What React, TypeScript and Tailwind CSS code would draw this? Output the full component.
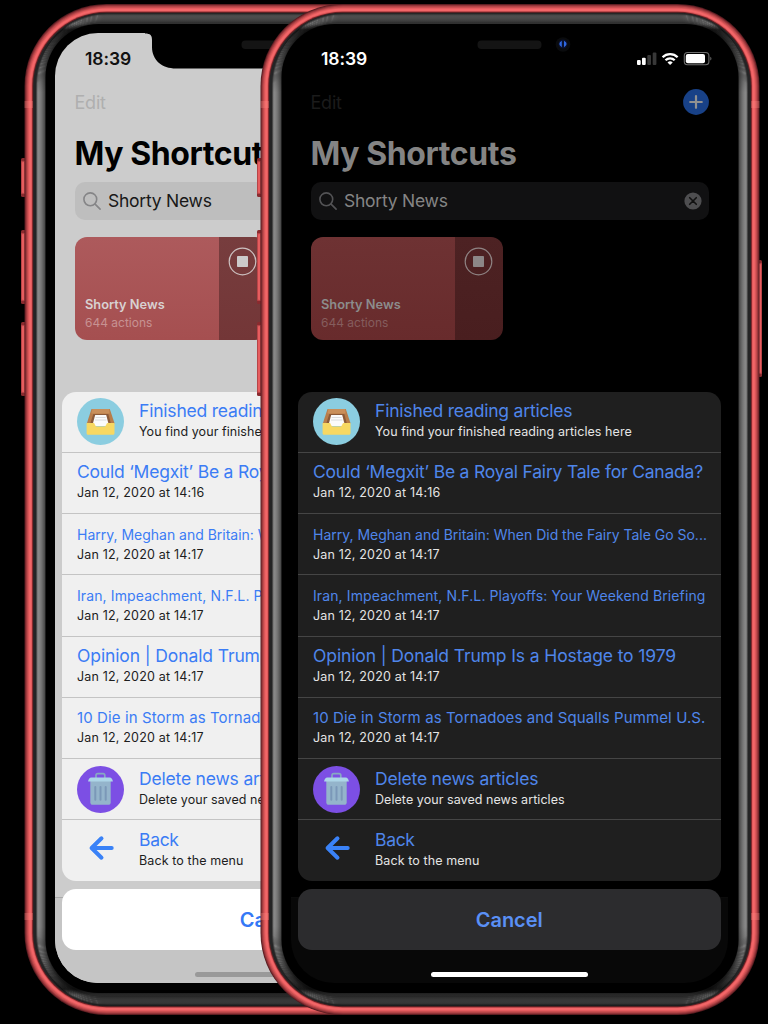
import { useId } from "react";
import clsx from "clsx";

type Row = {
  title: string;
  sub: string;
  icon?: "tray" | "trash" | "back";
  titleClass: string;
  subClass: string;
};

const ROWS: Row[] = [
  { title: "Finished reading articles", sub: "You find your finished reading articles here", icon: "tray", titleClass: "text-[17.5px] tracking-[-0.2px]", subClass: "tracking-[0.07px]" },
  { title: "Could ‘Megxit’ Be a Royal Fairy Tale for Canada?", sub: "Jan 12, 2020 at 14:16", titleClass: "text-[17.5px] tracking-[-0.21px]", subClass: "tracking-[0.18px]" },
  { title: "Harry, Meghan and Britain: When Did the Fairy Tale Go So...", sub: "Jan 12, 2020 at 14:17", titleClass: "text-[14px] tracking-[-0.01px] pt-[1px]", subClass: "tracking-[0.18px]" },
  { title: "Iran, Impeachment, N.F.L. Playoffs: Your Weekend Briefing", sub: "Jan 12, 2020 at 14:17", titleClass: "text-[14px] tracking-[0.11px] pt-[1px]", subClass: "tracking-[0.18px]" },
  { title: "Opinion | Donald Trump Is a Hostage to 1979", sub: "Jan 12, 2020 at 14:17", titleClass: "text-[17.5px] tracking-[-0.11px]", subClass: "tracking-[0.18px]" },
  { title: "10 Die in Storm as Tornadoes and Squalls Pummel U.S.", sub: "Jan 12, 2020 at 14:17", titleClass: "text-[15px] tracking-[0.1px] pt-[1px]", subClass: "tracking-[0.18px]" },
  { title: "Delete news articles", sub: "Delete your saved news articles", icon: "trash", titleClass: "text-[17.5px] tracking-[-0.19px]", subClass: "tracking-[0.06px]" },
  { title: "Back", sub: "Back to the menu", icon: "back", titleClass: "text-[17.5px] tracking-[-0.3px]", subClass: "tracking-[0.1px]" },
];

function TrayIcon() {
  return (
    <svg className="size-[47px]" viewBox="0 0 47 47">
      <circle cx="23.5" cy="23.5" r="23.5" fill="#8bcde0" />
      <path d="M14.5 11h18.3l4.8 14.5H9.8z" fill="#b87c49" />
      <path d="M15.3 11h16.8l.6 4.6H14.4z" fill="#c98f5a" />
      <path d="M16.3 16h15l2.7 10H13.1z" fill="#8b5a38" />
      <path d="M18.2 17h11l2.9 11H15.2z" fill="#fbfbfb" />
      <path d="M18.6 19.5h10M18 22h11.3" stroke="#d3d5d8" strokeWidth=".8" />
      <path d="M9.6 25h7.2c1 0 1.1 3.4 2.7 3.4h8.2c1.6 0 1.7-3.4 2.7-3.4h7.1v10c0 1.2-.5 1.8-1.6 1.8H11.2c-1.1 0-1.6-.6-1.6-1.8z" fill="#f7d862" />
    </svg>
  );
}

function TrashIcon() {
  return (
    <svg className="size-[47px]" viewBox="0 0 47 47">
      <circle cx="23.5" cy="23.5" r="23.5" fill="#7c4fe4" />
      <path d="M19 12V9.6c0-1.2.6-1.9 1.8-1.9h5.2c1.2 0 1.8.7 1.8 1.9V12" fill="none" stroke="#86a9c2" strokeWidth="1.7" />
      <path d="M13.3 15h20.4v21.2c0 1.7-.9 2.6-2.6 2.6H15.9c-1.7 0-2.6-.9-2.6-2.6z" fill="#94b4cb" />
      <path d="M14.4 11.500h18.2c1.9 0 3.1 1.900 3.300 4H11.100c.2-2.100 1.400-4 3.300-4z" fill="#add5e8" />
      <path d="M18.300 21v12.800M23.500 21v12.800M28.700 21v12.800" stroke="#7b98b8" strokeWidth="2" strokeLinecap="round" />
    </svg>
  );
}

function BackIcon() {
  return (
    <svg className="size-[47px]" viewBox="0 0 47 47">
      <path d="M24.500 13.300L14.600 23l9.900 9.700M15 23h19.700" fill="none" stroke="#3a82f7" strokeWidth="4" strokeLinecap="round" strokeLinejoin="round" />
    </svg>
  );
}

function PhoneFrame() {
  const id = useId();
  const side = `side${id}`;
  const bands: [number, string][] = [
    [0, "#541b1f"], [0.7, "#802c31"], [1.6, "#a33c40"], [2.6, "#c44c4e"], [3.7, "#e05a5c"],
    [4.8, "#f36668"], [6.9, "#d95557"], [7.7, "#6e2024"], [8.7, "#242425"],
  ];
  const glass = [0.52, 0.9, 1, 0.95, 0.88, 0.8, 0.7, 0.6, 0.5, 0.38];
  const button = (x: number, y: number, h: number) => (
    <g key={y}>
      <rect x={x} y={y} width="6" height={h} rx="1.5" fill="#8a2b2f" />
      <rect x={x} y={y + 3} width="4.5" height={h - 6} rx="1" fill="#b84447" />
      <rect x={x + 1} y={y + 4} width="2.6" height={h - 8} rx="1" fill="#e65d5f" />
      <rect x={x + 3.6} y={y + 4} width=".8" height={h - 8} fill="#a23a3d" />
    </g>
  );
  return (
    <svg className="absolute top-0 left-0 overflow-visible" width="500" height="1011" viewBox="0 0 500 1011" aria-hidden="true">
      <defs>
        <linearGradient id={side} gradientUnits="userSpaceOnUse" x1="0" y1="9" x2="0" y2="1002">
          <stop offset="0" stopColor="#5c5c5c" />
          <stop offset=".011" stopColor="#808080" />
          <stop offset=".017" stopColor="#222" />
          <stop offset=".034" stopColor="#484848" />
          <stop offset=".08" stopColor="#a2a2a2" />
          <stop offset=".92" stopColor="#a2a2a2" />
          <stop offset=".955" stopColor="#707070" />
          <stop offset=".983" stopColor="#202020" />
          <stop offset=".989" stopColor="#6c6c6c" />
          <stop offset="1" stopColor="#3c3c3c" />
        </linearGradient>
      </defs>
      {button(-3, 154, 39)}
      {button(-3, 226, 74)}
      {button(-3, 318, 74)}
      <g transform="matrix(-1 0 0 1 500 0)">{button(-2, 256, 117)}</g>
      {bands.map(([d, c]) => (
        <rect key={d} x={0.5 + d} y={d} width={499 - 2 * d} height={1011 - 2 * d} rx={82 - d} fill={c} />
      ))}
      {glass.map((o, i) => {
        const box = { x: 12.2 + i, y: 9.4 + i, width: 475.6 - 2 * i, height: 992.2 - 2 * i, rx: 70.5 - i * 1.5 };
        return (
          <g key={i}>
            <rect {...box} fill="#000" />
            <rect {...box} fill={`url(#${side})`} opacity={o} />
          </g>
        );
      })}
      <rect x="21.5" y="20" width="457" height="969" rx="53" fill="#000" />
      <g fill="#ff8a86" opacity=".3">
        <rect x=".5" y="97" width="8.5" height="7" />
        <rect x=".5" y="909" width="8.5" height="7" />
        <rect x="491" y="97" width="8.5" height="7" />
        <rect x="491" y="909" width="8.5" height="7" />
      </g>
    </svg>
  );
}

function StatusIcons() {
  return (
    <svg width="76" height="16" viewBox="0 0 76 16" aria-label="status">
      <g fill="#fff">
        <rect x="1" y="9" width="3.7" height="5" rx="1" />
        <rect x="6" y="6.8" width="3.7" height="7.2" rx="1" />
        <rect x="11.3" y="4" width="3.7" height="10" rx="1" opacity=".22" />
        <rect x="16.7" y="1.5" width="3.7" height="12.5" rx="1" opacity=".22" />
      </g>
      <g fill="none" stroke="#fff" strokeWidth="2.3">
        <path d="M26.6 6.2a10.5 10.5 0 0 1 15 0" />
        <path d="M29.5 9.3a6.5 6.5 0 0 1 9.2 0" />
      </g>
      <path d="M31.5 11.4a3.8 3.8 0 0 1 5.2 0L34.1 14z" fill="#fff" />
      <rect x="48.3" y="1.5" width="24.6" height="12.2" rx="3.3" fill="none" stroke="#6d6d6d" strokeWidth="1.1" />
      <rect x="49.8" y="3" width="19.2" height="9.2" rx="2" fill="#fff" />
      <path d="M74.3 5.7c1.5.6 1.5 3.3 0 3.9z" fill="#6d6d6d" />
    </svg>
  );
}

function NotchAndCamera() {
  return (
    <svg className="absolute top-0 left-0 overflow-visible" width="437" height="36" viewBox="0 0 437 36" aria-hidden="true">
      <path d="M90 -1 V0.5 C95.5 0.5 97 2.5 97 7 V14 C97 27 107 35.5 121 35.5 H316 C330 35.5 340 27 340 14 V7 C340 2.5 341.5 0.5 347 0.5 V-1z" fill="#000" />
      <rect x="186.500" y="7.500" width="64" height="8.500" rx="4" fill="#141414" />
      <circle cx="272" cy="11.500" r="7.300" fill="#0a0b0d" />
      <circle cx="272" cy="11" r="4.500" fill="#0a1230" />
      <path d="M270.800 7.800q-5 3.100 0 6.400zM273 7.800q5.200 3.100 0 6.400z" fill="#2f68e0" />
    </svg>
  );
}

function Phone({ dark }: { dark: boolean }) {
  return (
    <div className={clsx("relative h-[1011px] w-[500px] shrink-0 pt-[29px] pl-[31px]", dark && "-ml-[264px]")}>
      <PhoneFrame />
      <div className={clsx("relative flex h-[950px] w-[437px] flex-col overflow-hidden rounded-[43px]", dark ? "bg-black" : "bg-[#ccc]")}>
        <div className={clsx("absolute inset-x-0 bottom-0 h-[86px] border-t", dark ? "border-[#0b0b0b] bg-[#080808]" : "border-[#a9a9a9] bg-[#c5c5c5]")} />
        <NotchAndCamera />

        <header className="relative h-[52px] shrink-0">
          <div className="flex items-center justify-between pt-[14px] pr-[16px] pl-[30px]">
            <span className={clsx("text-[17.5px] leading-[24px] font-semibold tracking-[-0.1px]", dark ? "text-white" : "text-[#111]")}>18:39</span>
            {dark && <StatusIcons />}
          </div>
        </header>

        <div className="relative -mt-px flex h-[36px] shrink-0 items-center justify-between pr-[19px] pl-[19.5px]">
          <span className={clsx("text-[18px] tracking-[-0.2px]", dark ? "text-[#1b1b1b]" : "text-[#afafaf]")}>Edit</span>
          {dark && (
            <svg className="size-[26px]" viewBox="0 0 26 26">
              <circle cx="13" cy="13" r="12.9" fill="#184187" />
              <path d="M13 7.2v11.6M7.2 13h11.6" stroke="#919191" strokeWidth="2.2" strokeLinecap="round" />
            </svg>
          )}
        </div>

        <h1 className={clsx("relative mt-[14px] h-[40px] shrink-0 pl-[19.5px] text-[32px] leading-[40px] font-bold tracking-[-0.4px] whitespace-nowrap", dark ? "text-[#848484]" : "text-black")}>My Shortcuts</h1>

        <div className={clsx("relative mt-[8px] ml-[19.5px] flex h-[38px] w-[398px] shrink-0 items-center rounded-[10px] pr-[7px] pl-[8px]", dark ? "bg-[#111112]" : "bg-[#bebebe]")}>
          <svg className="size-[18px]" viewBox="0 0 18 18" fill="none" stroke={dark ? "#535355" : "#858587"} strokeWidth="1.6" strokeLinecap="round">
            <circle cx="7.3" cy="7.3" r="6.4" />
            <path d="M12.1 12.1l5 5" />
          </svg>
          <span className={clsx("ml-[7.5px] flex-1 text-[17.5px] tracking-[-0.25px]", dark ? "text-[#858585]" : "text-[#181818]")}>Shorty News</span>
          <svg className="size-[18px]" viewBox="0 0 18 18">
            <circle cx="9" cy="9" r="8.6" fill="#4e4e50" />
            <path d="M5.7 5.7l6.6 6.6M12.3 5.7l-6.6 6.6" stroke="#111" strokeWidth="1.6" strokeLinecap="round" />
          </svg>
        </div>

        <div className="relative mt-[16.5px] ml-[19.5px] flex h-[103px] w-[192.5px] shrink-0 overflow-hidden rounded-[12px]">
          <div className={clsx("flex w-[144.5px] flex-col justify-end bg-linear-to-b pb-[8px] pl-[10.5px]", dark ? "from-[#6e3233] to-[#682b2c]" : "from-[#ad5a5c] to-[#a54f50]")}>
            <span className={clsx("text-[12.8px] leading-[18px] font-semibold", dark ? "text-[#8c8c8c]" : "text-[#d8d1d1]")}>Shorty News</span>
            <span className={clsx("text-[12px] leading-[18px]", dark ? "text-[#855d5d]" : "text-[#c79292]")}>644 actions</span>
          </div>
          <div className={clsx("flex flex-1 bg-linear-to-b pt-[10px] pl-[9px]", dark ? "from-[#4d2223] to-[#491e1f]" : "from-[#773d3e] to-[#733637]")}>
            <svg className="size-[29px]" viewBox="0 0 29 29">
              <circle cx="14.5" cy="14.5" r="13.3" fill="none" stroke={dark ? "#8f8484" : "#cdc2c2"} strokeWidth="1.2" />
              <rect x="9" y="9" width="11" height="11" rx=".8" fill={dark ? "#8c8787" : "#cccaca"} />
            </svg>
          </div>
        </div>

        <div className={clsx("relative mt-[52px] ml-[6.5px] flex h-[489px] w-[423.5px] shrink-0 flex-col overflow-hidden rounded-[14px]", dark ? "bg-[#1f1f1f]" : "bg-[#f0f0f0]")}>
          {ROWS.map((row, i) => (
            <div key={row.title} className={clsx("flex flex-1 items-center pl-[15.5px]", i > 0 && "border-t", dark ? "border-[#454545]" : "border-[#c4c4c4]")}>
              {row.icon && (
                <div className="mr-[15px] w-[47px] shrink-0">
                  {row.icon === "tray" && <TrayIcon />}
                  {row.icon === "trash" && <TrashIcon />}
                  {row.icon === "back" && <div className="-mt-[6px] pt-[3px]"><BackIcon /></div>}
                </div>
              )}
              <div className="flex flex-col pb-[1px] whitespace-nowrap">
                <span className={clsx("h-[22px] leading-[22px]", row.titleClass, dark ? "text-[#4f86ea]" : "text-[#3b7cf5]")}>{row.title}</span>
                <span className={clsx("h-[20px] text-[12.5px] leading-[20px]", row.subClass, dark ? "text-[#e4e4e4]" : "text-[#1d1d1d]")}>{row.sub}</span>
              </div>
            </div>
          ))}
        </div>

        <div className={clsx("relative mt-[8px] ml-[6.5px] flex h-[61px] w-[423.5px] shrink-0 items-center justify-center rounded-[14px] pt-[1px] text-[20px] font-semibold", dark ? "bg-[#2c2c2e] text-[#5a90f5]" : "bg-white text-[#3478f6]")}>Cancel</div>
        <div className={clsx("relative mt-[22px] h-[5.5px] w-[157.5px] shrink-0 self-center rounded-full", dark ? "bg-white" : "bg-[#999]")} />
      </div>
    </div>
  );
}

export default function App() {
  return (
    <main className="flex h-[1024px] w-[768px] overflow-hidden bg-black pt-[4px] pl-[24px] font-[Inter,'Liberation_Sans',sans-serif]">
      <Phone dark={false} />
      <Phone dark />
    </main>
  );
}
